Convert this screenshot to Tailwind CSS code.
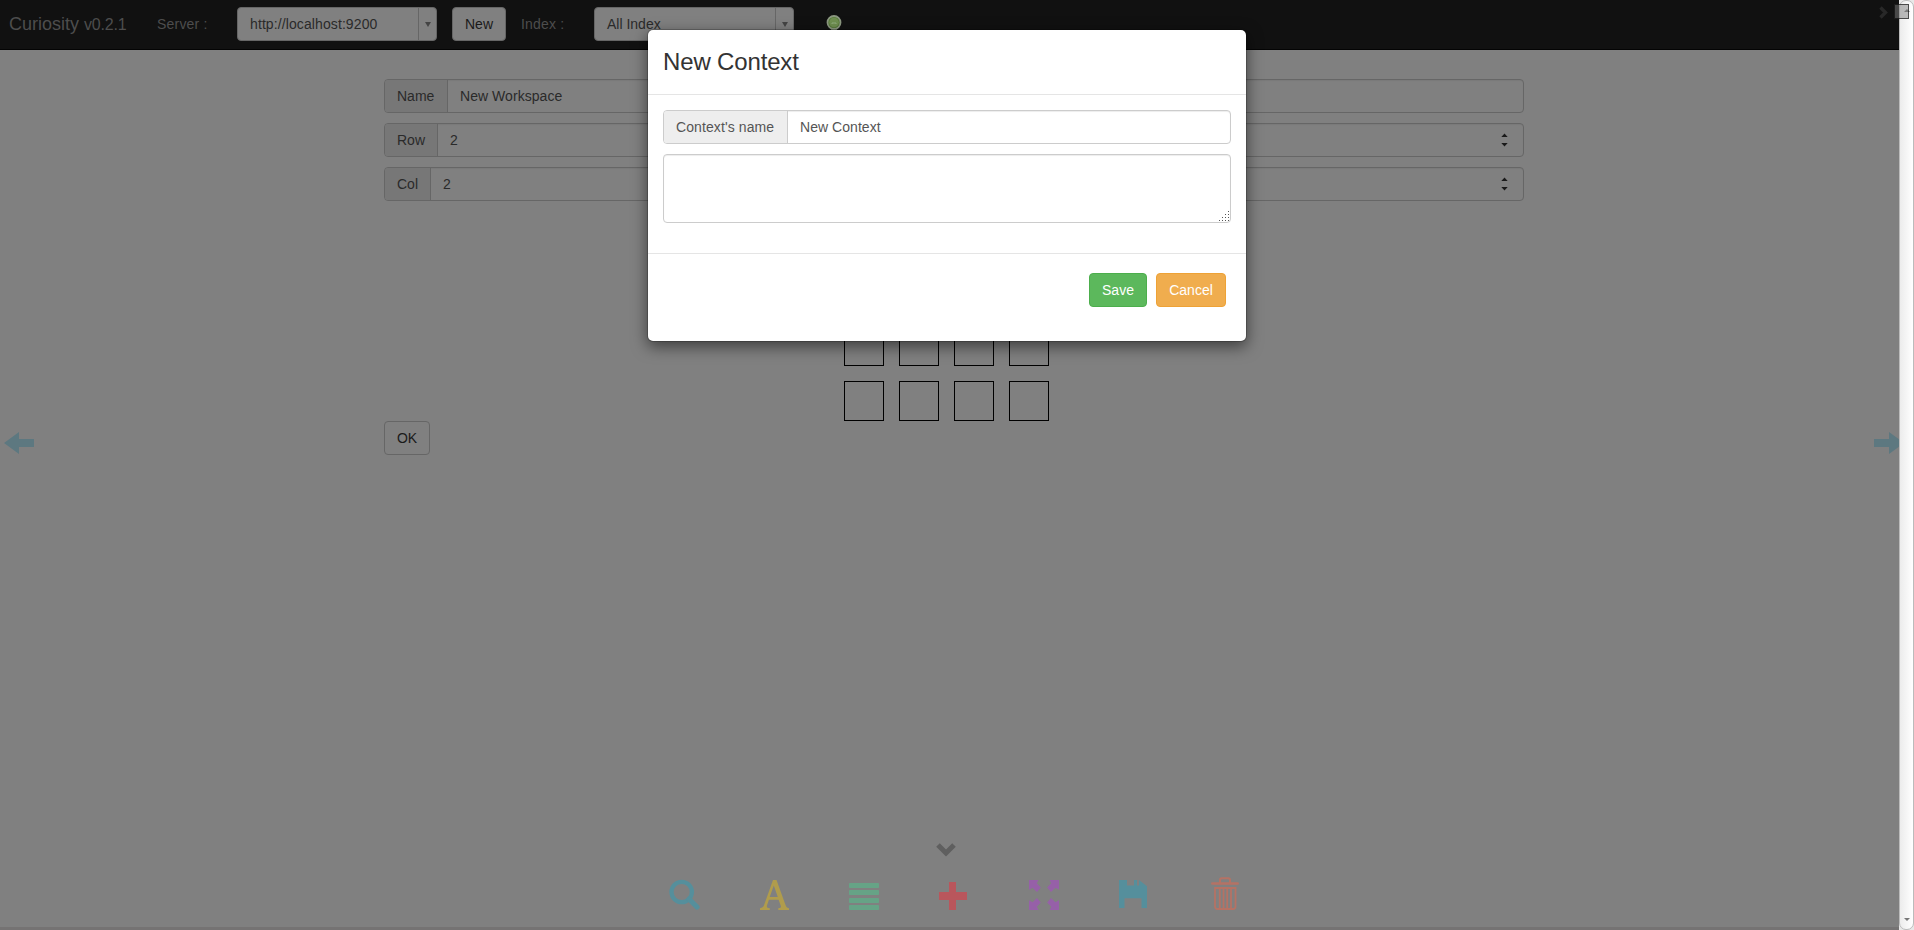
<!DOCTYPE html>
<html lang="en">
<head>
<meta charset="utf-8">
<title>Curiosity</title>
<script src="https://cdn.jsdelivr.net/npm/@tailwindcss/browser@4"></script>
</head>
<body class="bg-[#808080] overflow-hidden">
<div class="relative flex w-[1914px] h-[930px] overflow-hidden text-[14px] leading-5 text-[#2a2a2a] font-['Liberation_Sans',Arial,sans-serif]">
  <div class="relative flex flex-col w-[1899px] h-full overflow-hidden bg-[#808080]">
    <nav class="flex items-start h-[50px] shrink-0 bg-[#111111] border-b border-[#040404] text-[#4d4d4d] pl-[9px]">
      <div class="w-[148px] pt-[14px] text-[18px] whitespace-nowrap">Curiosity <span class="text-[16px] -tracking-[0.2px]">v0.2.1</span></div>
      <div class="w-[80px] pt-[14px] tracking-[0.2px]">Server :</div>
      <div class="flex mt-[7px] w-[200px] h-[34px] rounded-[4px] border border-[#666] bg-[#808080] text-[#2a2a2a]">
        <div class="flex-1 pl-3 pt-[6px] tracking-[0.1px]">http://localhost:9200</div>
        <div class="w-[18px] border-l border-[#666] flex items-center justify-center"><svg width="6" height="5" viewBox="0 0 6 5" fill="#444"><path d="M0 0h6L3 5z"/></svg></div>
      </div>
      <button class="ml-[15px] mt-[7px] w-[54px] h-[34px] rounded-[4px] border border-[#666] bg-[#808080] text-[#1a1a1a]">New</button>
      <div class="ml-[15px] w-[73px] pt-[14px] tracking-[0.2px]">Index :</div>
      <div class="flex mt-[7px] w-[200px] h-[34px] rounded-[4px] border border-[#666] bg-[#808080] text-[#2a2a2a]">
        <div class="flex-1 pl-3 pt-[6px]">All Index</div>
        <div class="w-[18px] border-l border-[#666] flex items-center justify-center"><svg width="6" height="5" viewBox="0 0 6 5" fill="#444"><path d="M0 0h6L3 5z"/></svg></div>
      </div>
      <svg class="ml-[32px] mt-[14px]" width="16" height="18" viewBox="0 0 16 18"><path d="M5 14h6v4H5z" fill="#66705a"/><circle cx="8" cy="8.500" r="6.500" fill="#4f7530" stroke="#8c9880" stroke-width="1.800"/><circle cx="8" cy="8.500" r="4.900" fill="#6f8f50"/><path d="M6 10V9h4v1" fill="none" stroke="#91ad7c"/></svg>
      <svg class="ml-auto mr-[11px] mt-[6px]" width="9" height="13" viewBox="0 0 9 13"><path d="M1.500 1.500l5 5-5 5" fill="none" stroke="#282828" stroke-width="3.400"/></svg>
    </nav>

    <main class="ml-[384px] mt-[29px] w-[1140px] flex flex-col">
      <div class="flex flex-col gap-[10px]">
        <div class="flex h-[34px] rounded-[4px] border border-[#666] shadow-[inset_0_1px_1px_rgba(0,0,0,0.05)]">
          <div class="w-[63px] pl-3 pt-[6px] bg-[#777] border-r border-[#666] rounded-l-[3px]">Name</div><div class="pl-3 pt-[6px] tracking-[0.05px]">New Workspace</div>
        </div>
        <div class="flex h-[34px] rounded-[4px] border border-[#666] shadow-[inset_0_1px_1px_rgba(0,0,0,0.05)]">
          <div class="w-[53px] pl-3 pt-[6px] bg-[#777] border-r border-[#666] rounded-l-[3px]">Row</div><div class="pl-3 pt-[6px]">2</div>
          <svg class="ml-auto mr-[15px] mt-[9px]" width="7" height="14" viewBox="0 0 7 14" fill="#1a1a1a"><path d="M.3 4L3.5.5 6.7 4zM.3 10L3.5 13.5 6.7 10z"/></svg>
        </div>
        <div class="flex h-[34px] rounded-[4px] border border-[#666] shadow-[inset_0_1px_1px_rgba(0,0,0,0.05)]">
          <div class="w-[46px] pl-3 pt-[6px] bg-[#777] border-r border-[#666] rounded-l-[3px]">Col</div><div class="pl-3 pt-[6px]">2</div>
          <svg class="ml-auto mr-[15px] mt-[9px]" width="7" height="14" viewBox="0 0 7 14" fill="#1a1a1a"><path d="M.3 4L3.5.5 6.7 4zM.3 10L3.5 13.5 6.7 10z"/></svg>
        </div>
      </div>
      <div class="grid grid-cols-[repeat(4,40px)] auto-rows-[40px] gap-[15px] mt-[15px] ml-[460px]">
        <i class="border border-black"></i><i class="border border-black"></i><i class="border border-black"></i><i class="border border-black"></i>
        <i class="border border-black"></i><i class="border border-black"></i><i class="border border-black"></i><i class="border border-black"></i>
        <i class="border border-black"></i><i class="border border-black"></i><i class="border border-black"></i><i class="border border-black"></i>
        <i class="border border-black"></i><i class="border border-black"></i><i class="border border-black"></i><i class="border border-black"></i>
      </div>
      <button class="w-[46px] h-[34px] rounded-[4px] border border-[#666] text-[#1a1a1a]">OK</button>
    </main>

    <svg class="absolute left-[4px] top-[432px]" width="30" height="22" viewBox="0 0 30 22" fill="#5d7880"><path d="M0 11L15 0v7h15v8H15v7z"/></svg>
    <svg class="absolute left-[1874px] top-[432px]" width="30" height="22" viewBox="0 0 30 22" fill="#5d7880"><path d="M30 11L15 0v7H0v8h15v7z"/></svg>

    <footer class="mt-auto h-[88px] flex flex-col border-b-[3px] border-[#757373]">
      <svg class="ml-[936px] shrink-0" width="20" height="15" viewBox="0 0 20 15"><path d="M2 3l8 8 8-8" fill="none" stroke="#5f5f5f" stroke-width="5"/></svg>
      <div class="flex items-end h-[53px] pl-[669px]">
        <svg class="mr-[60px]" width="31" height="31" viewBox="0 0 31 31" fill="none" stroke="#558f9c"><circle cx="12.700" cy="13" r="10.200" stroke-width="4.300"/><path d="M20 20l8 8" stroke-width="5.200" stroke-linecap="round"/></svg>
        <svg class="mr-[60px]" width="29" height="31" viewBox="0 0 29 31" fill="#b09c4c"><path fill-rule="evenodd" d="M0 31v-1.800c2.500-.4 3.200-.9 4.100-3.200L13 1h3.500l9 25c.8 2.200 1.300 2.800 3.500 3.200V31H18.300v-1.800c3-.3 3-.8 2.200-3.200l-1.900-5.300H8.900l-1.700 5.100c-.8 2.400-.3 3.100 2.600 3.400V31zM9.700 18h8.100L13.800 6.500z"/></svg>
        <svg class="mr-[60px]" width="30" height="27" viewBox="0 0 30 27" fill="#66a386"><rect width="30" height="5" rx=".8"/><rect y="7" width="30" height="5" rx=".8"/><rect y="15" width="30" height="5" rx=".8"/><rect y="22" width="30" height="5" rx=".8"/></svg>
        <svg class="mr-[62px]" width="28" height="28" viewBox="0 0 28 28" fill="#b9565c"><path d="M10 0h7v10h11v8H17v10h-7V18H0v-8h10z"/></svg>
        <svg class="mr-[60px]" width="30" height="30" viewBox="0 0 30 30" fill="#9660a8"><path id="corner" d="M0 0h9.500L7.800 3.200l4 4.400-3.800 4.400-4.400-4.200L0 9.800z"/><use href="#corner" transform="matrix(-1 0 0 1 30 0)"/><use href="#corner" transform="matrix(1 0 0 -1 0 30)"/><use href="#corner" transform="rotate(180 15 15)"/></svg>
        <svg class="mr-[65px] mb-[2px]" width="28" height="28" viewBox="0 0 28 28" fill="#558f9c"><path fill-rule="evenodd" d="M0 0h8v5.500h12V0l8 6.200V28h-5.500V18.300H5.500V28H0z"/><path d="M15 0h3v6h-3z"/></svg>
        <svg class="-ml-px" width="28" height="33" viewBox="0 0 28 33" fill="none" stroke="#b57264" stroke-width="2"><path d="M1.300 6.500h25.400" stroke-width="2.600" stroke-linecap="round"/><path d="M9 6V3q0-1.700 1.700-1.700h6.600Q19 1.300 19 3v3"/><path d="M4 11h20.500v18.500Q24.500 32 22 32H6.500Q4 32 4 29.500zM8.800 11v21M12.500 11v21M16.200 11v21M20 11v21" stroke-width="1.800"/></svg>
      </div>
    </footer>
  </div>

  <div class="w-[15px] h-full bg-[#e8e8e8]">
    <div class="w-full h-full flex flex-col items-center justify-between rounded-[7px] border border-[#bbb] bg-linear-to-r from-[#ececec] to-white pt-[8px] pb-[8px]">
      <svg width="6" height="3" viewBox="0 0 6 3" fill="#777"><path d="M0 3l3-3 3 3z"/></svg>
      <svg width="6" height="3" viewBox="0 0 6 3" fill="#777"><path d="M0 0h6L3 3z"/></svg>
    </div>
  </div>
  <div class="absolute left-[1894px] top-[4px] w-[15px] h-[15px] border border-black/60 bg-[#808080]/50"></div>

  <section class="absolute left-[647px] top-[29px] w-[600px] h-[313px] rounded-[6px] border border-black/20 bg-white bg-clip-padding shadow-[0_5px_15px_rgba(0,0,0,0.5)] flex flex-col">
    <header class="h-[65px] px-[15px] pt-[19px] border-b border-[#e5e5e5] text-[24px] leading-[26px] -tracking-[0.15px] text-[#333]">New Context</header>
    <div class="h-[158px] p-[15px] flex flex-col gap-[10px] text-[#555]">
      <div class="flex h-[34px] shrink-0 rounded-[4px] border border-[#ccc] shadow-[inset_0_1px_1px_rgba(0,0,0,0.075)]">
        <div class="w-[124px] pl-3 pt-[6px] bg-[#eee] border-r border-[#ccc] rounded-l-[3px] tracking-[0.1px]">Context's name</div><div class="pl-3 pt-[6px] tracking-[0.05px]">New Context</div>
      </div>
      <div class="h-[69px] shrink-0 flex items-end justify-end rounded-[4px] border border-[#ccc] shadow-[inset_0_1px_1px_rgba(0,0,0,0.075)] pr-[1px] pb-[1px]">
        <svg width="10" height="10" viewBox="0 0 10 10" fill="#555" shape-rendering="crispEdges"><path d="M0 9h1v1H0zM3 9h1v1H3zM6 9h1v1H6zM9 9h1v1H9zM3 6h1v1H3zM6 6h1v1H6zM9 6h1v1H9zM6 3h1v1H6zM9 3h1v1H9zM9 0h1v1H9z"/></svg>
      </div>
    </div>
    <footer class="flex-1 flex justify-end gap-[9px] border-t border-[#e5e5e5] pt-[19px] pr-[20px] text-white">
      <button class="w-[58px] h-[34px] rounded-[4px] border border-[#4cae4c] bg-[#5cb85c]">Save</button>
      <button class="w-[70px] h-[34px] rounded-[4px] border border-[#eea236] bg-[#f0ad4e]">Cancel</button>
    </footer>
  </section>
</div>
</body>
</html>
